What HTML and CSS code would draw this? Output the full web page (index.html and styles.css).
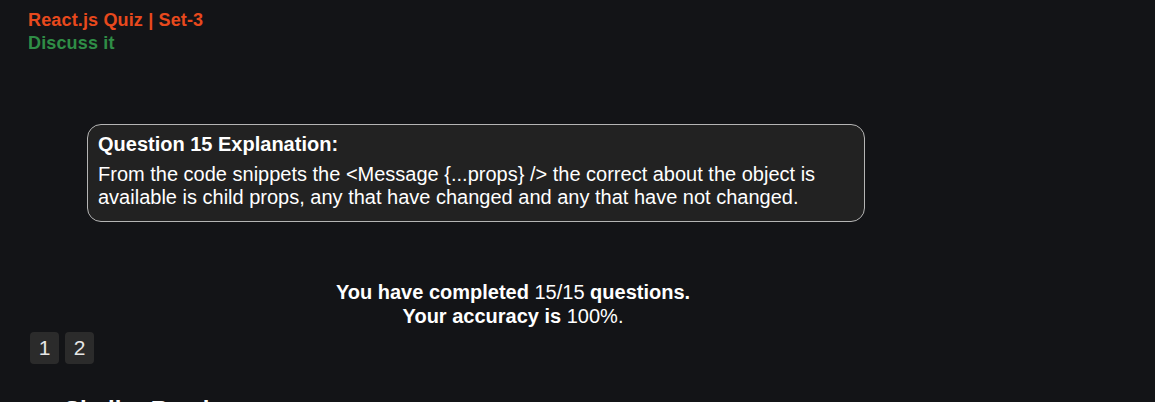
FILE: index.html
```html
<!DOCTYPE html>
<html>
<head>
<meta charset="utf-8">
<link rel="stylesheet" href="styles.css">
</head>
<body>
<div class="page">
  <div class="head">
    <div class="title">React.js Quiz | Set-3</div>
    <div class="discuss">Discuss it</div>
  </div>
  <div class="explain">
    <div class="q">Question 15 Explanation:</div>
    <div class="body">From the code snippets the &lt;Message {...props} /&gt; the correct about the object is available is child props, any that have changed and any that have not changed.</div>
  </div>
  <div class="result">
    <div><b>You have completed</b> 15/15 <b>questions.</b></div>
    <div><b>Your accuracy is</b> 100%.</div>
  </div>
  <div class="pager">
    <span class="pg">1</span>
    <span class="pg">2</span>
  </div>
  <h2 class="similar">Similar Reads</h2>
</div>
</body>
</html>
```
FILE: styles.css
```css
html, body { margin: 0; padding: 0; }
body {
  background: #131417;
  color: #fff;
  font-family: "Liberation Sans", Arial, sans-serif;
  overflow: hidden;
  height: 402px;
}
.page { padding: 9px 0 0 28px; width: 970px; }
.head { font-weight: bold; font-size: 18px; line-height: 23px; letter-spacing: 0.15px; }
.title { color: #e8491d; }
.discuss { color: #2f8d46; }
.explain {
  margin: 69px 0 0 59px;
  width: 756px;
  border: 1px solid #b5b5b5;
  border-radius: 14px;
  background: #222222;
  padding: 8px 10px 12px 10px;
  font-size: 20px;
  line-height: 23px;
}
.q { font-weight: bold; margin-bottom: 7px; }
.result {
  margin-top: 58px;
  text-align: center;
  font-size: 20px;
  line-height: 24px;
}
.pager { display: flex; gap: 6px; margin-top: 4px; margin-left: 2px; }
.pg {
  width: 29px; height: 32px;
  background: #2b2b2b;
  border-radius: 4px;
  display: flex; align-items: center; justify-content: center;
  font-size: 21px; color: #e6e6e6;
}
.similar { margin: 31px 0 0 36px; font-size: 24px; line-height: 30px; }
```
